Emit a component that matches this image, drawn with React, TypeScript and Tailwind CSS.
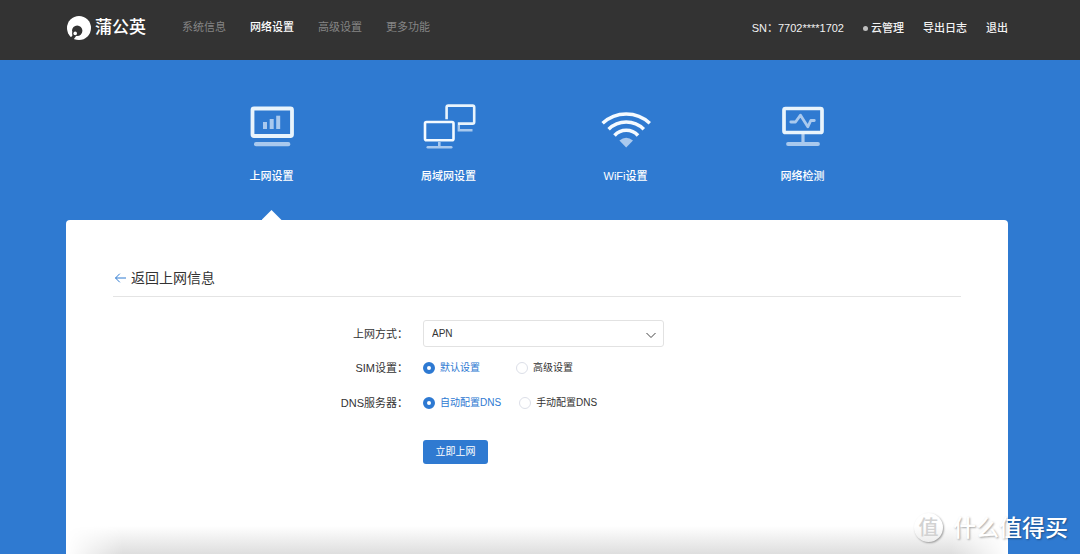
import type { ReactNode } from "react";

function Logo() {
  return (
    <a href="#home" className="flex items-center gap-1 text-white">
      <svg width="24" height="26" viewBox="0 0 24 26">
        <circle cx="12" cy="13" r="12" fill="currentColor" />
        <circle cx="10.2" cy="15.8" r="5.2" fill="#333333" />
        <path d="M5.2 17L3.4 22.6L6.6 24.4L9.4 20.6Z" fill="#333333" />
        <path
          d="M1 17.5L3.8 22Q4.8 21.6 5.4 20.4Q4.9 18.4 5.1 16Z"
          fill="currentColor"
        />
        <circle cx="8.2" cy="18.4" r="1.8" fill="currentColor" />
      </svg>
      <span className="text-[17px] leading-6 font-medium">蒲公英</span>
    </a>
  );
}

function InternetIcon() {
  return (
    <svg width="60" height="48" viewBox="0 0 60 48" fill="none">
      <rect x="10.5" y="6.5" width="39.5" height="27.5" rx="1.5" stroke="#e9f4fc" strokeWidth="3.8" />
      <g fill="#a9c9ee">
        <rect x="21" y="20" width="4" height="7" />
        <rect x="27.7" y="17" width="4" height="10" />
        <rect x="34.2" y="13.7" width="4" height="13.3" />
        <rect x="12" y="40" width="36.3" height="4.2" rx="2" />
      </g>
    </svg>
  );
}

function LanIcon() {
  return (
    <svg width="60" height="48" viewBox="0 0 60 48" fill="none" strokeWidth="2.6">
      <path d="M39.8 23V28.2H53.5" stroke="#a9c9ee" strokeWidth="2.4" />
      <path
        d="M27.6 17.2V5.2Q27.6 3.6 29.2 3.6H53.6Q55.2 3.6 55.2 5.2V20Q55.2 21.6 53.6 21.6H38.8"
        stroke="#e9f4fc"
      />
      <path d="M20.3 40V45" stroke="#a9c9ee" />
      <path d="M8.8 45.2H32.2" stroke="#a9c9ee" strokeLinecap="round" />
      <rect x="6" y="20" width="28.5" height="18.3" rx="1.5" stroke="#f4faff" />
    </svg>
  );
}

function WifiIcon() {
  return (
    <svg width="60" height="48" viewBox="0 0 60 48" fill="none">
      <g stroke="#f4faff" strokeWidth="3.5">
        <path d="M6.6 21.2A34.6 34.6 0 0 1 53.8 21.2" />
        <path d="M12.6 27.2A24.9 24.9 0 0 1 47.8 27.2" />
        <path d="M18.5 33.5A15.8 15.8 0 0 1 42 33.5" />
      </g>
      <path d="M23.4 38.4Q30.2 33 37 38.4L30.2 45.4Z" fill="#a9c9ee" />
    </svg>
  );
}

function DetectIcon() {
  return (
    <svg width="60" height="48" viewBox="0 0 60 48" fill="none">
      <path d="M30 32V42" stroke="#a9c9ee" strokeWidth="3.2" />
      <path d="M15 42H45" stroke="#a9c9ee" strokeWidth="3.8" strokeLinecap="round" />
      <rect x="11" y="6.5" width="38" height="24" rx="1.5" stroke="#e9f4fc" strokeWidth="3.7" />
      <path
        d="M17.8 20H22.5L27.5 13.2L34.8 24.8L37.8 18.5H41.3"
        stroke="#a9c9ee"
        strokeWidth="2.8"
        strokeLinecap="round"
        strokeLinejoin="round"
      />
    </svg>
  );
}

const navItems = ["系统信息", "网络设置", "高级设置", "更多功能"];

const tabs: { label: string; icon: ReactNode }[] = [
  { label: "上网设置", icon: <InternetIcon /> },
  { label: "局域网设置", icon: <LanIcon /> },
  { label: "WiFi设置", icon: <WifiIcon /> },
  { label: "网络检测", icon: <DetectIcon /> },
];

function Header() {
  return (
    <header className="flex h-15 items-start justify-between bg-[#333333] pr-[72px] pl-[67px] text-[11px] leading-4 font-medium">
      <div className="flex items-center pt-[15px]">
        <Logo />
        <nav className="ml-9 flex gap-6 pb-0.5">
          {navItems.map((item) => (
            <a
              key={item}
              href="#nav"
              className={item === "网络设置" ? "text-white" : "font-normal text-[#858585]"}
            >
              {item}
            </a>
          ))}
        </nav>
      </div>
      <div className="flex items-center gap-[19px] pt-5 text-[#f2f2f2]">
        <span>SN：7702****1702</span>
        <a href="#cloud" className="flex items-center gap-[3px]">
          <span className="size-[5px] rounded-full bg-[#bfbfbf]" />
          云管理
        </a>
        <a href="#log">导出日志</a>
        <a href="#logout">退出</a>
      </div>
    </header>
  );
}

function Tabs() {
  return (
    <nav className="mx-auto grid w-full max-w-[708px] grid-cols-4 pt-[42px]">
      {tabs.map((tab, i) => (
        <a key={tab.label} href="#tab" className="flex flex-col items-center text-white">
          {tab.icon}
          <span className="mt-[18px] text-[11px] leading-4 font-medium">{tab.label}</span>
          <span
            className={
              i === 0
                ? "mt-[26px] h-[10px] w-5 bg-white [clip-path:polygon(50%_0,100%_100%,0_100%)]"
                : "mt-[26px] h-[10px]"
            }
          />
        </a>
      ))}
    </nav>
  );
}

function Row({ label, htmlFor, children }: { label: string; htmlFor?: string; children: ReactNode }) {
  return (
    <div className="flex items-center gap-[15px]">
      <label htmlFor={htmlFor} className="w-[295px] text-right text-[11px] leading-4 text-[#333333]">
        {label}：
      </label>
      {children}
    </div>
  );
}

function RadioGroup({ name, options }: { name: string; options: string[] }) {
  return (
    <div role="radiogroup" aria-label={name} className="flex gap-[18px] text-[10px] leading-4 text-[#333333]">
      {options.map((option, i) => (
        <label
          key={option}
          className="flex min-w-[75px] items-center gap-[5px] has-checked:text-[#2d79d2]"
        >
          <input
            type="radio"
            name={name}
            defaultChecked={i === 0}
            className="size-3 appearance-none rounded-full border border-[#dcdfe8] bg-white checked:border-4 checked:border-[#2d79d2]"
          />
          {option}
        </label>
      ))}
    </div>
  );
}

function Watermark() {
  return (
    <div className="absolute right-3 bottom-3 flex items-center gap-[10px] font-medium text-white [text-shadow:1px_1px_2px_rgba(0,0,0,0.35)]">
      <span className="flex size-[29px] items-center justify-center rounded-full text-[20px] leading-none text-[#d2d2d2] shadow-[1px_1px_2px_rgba(0,0,0,0.35)] [text-shadow:none]">
        值
      </span>
      <span className="text-[23px] leading-7">什么值得买</span>
    </div>
  );
}

export default function App() {
  return (
    <div
      lang="zh-CN"
      className='relative flex min-h-screen flex-col bg-[#2f7ad1] font-["Liberation_Sans","Noto_Sans_CJK_SC",sans-serif]'
    >
      <Header />
      <div className="flex flex-1 flex-col pr-[72px] pl-[66px]">
        <Tabs />
        <main className="flex flex-1 flex-col overflow-hidden rounded-t bg-white">
          <h1 className="mx-[47px] mt-[46px] border-b border-[#e4e4e4] pb-[6px]">
            <a href="#back" className="flex items-center gap-[5px] text-sm leading-6 text-[#333333]">
              <svg width="13" height="10" viewBox="0 0 13 10" fill="none" stroke="#2f7ad1">
                <path d="M13 5H2.5M6.8 0.7L2.5 5L6.8 9.3" />
              </svg>
              返回上网信息
            </a>
          </h1>
          <form className="mx-[47px] mt-[23px]" onSubmit={(e) => e.preventDefault()}>
            <Row label="上网方式" htmlFor="mode">
              <div className="relative w-[241px]">
                <select
                  id="mode"
                  className="h-[27px] w-full appearance-none rounded-[3px] border border-[#e2e2e2] bg-white px-2 text-[10px] text-[#333333]"
                >
                  <option>APN</option>
                </select>
                <svg
                  className="pointer-events-none absolute top-3 right-2"
                  width="10"
                  height="7"
                  viewBox="0 0 10 7"
                  fill="none"
                  stroke="#444444"
                >
                  <path d="M0.5 1L5 5.5L9.5 1" />
                </svg>
              </div>
            </Row>
            <div className="mt-[13px] space-y-[19px]">
              <Row label="SIM设置">
                <RadioGroup name="SIM设置" options={["默认设置", "高级设置"]} />
              </Row>
              <Row label="DNS服务器">
                <RadioGroup name="DNS服务器" options={["自动配置DNS", "手动配置DNS"]} />
              </Row>
            </div>
            <button
              type="submit"
              className="mt-[29px] ml-[310px] h-6 w-[65px] rounded-[3px] bg-[#2f7ad1] text-[10px] leading-4 text-white"
            >
              立即上网
            </button>
          </form>
          <div className="mt-auto h-7 bg-linear-to-t from-[#dedede] to-white mask-[linear-gradient(to_right,transparent,black_6%,black_94%,transparent)]" />
        </main>
      </div>
      <Watermark />
    </div>
  );
}
